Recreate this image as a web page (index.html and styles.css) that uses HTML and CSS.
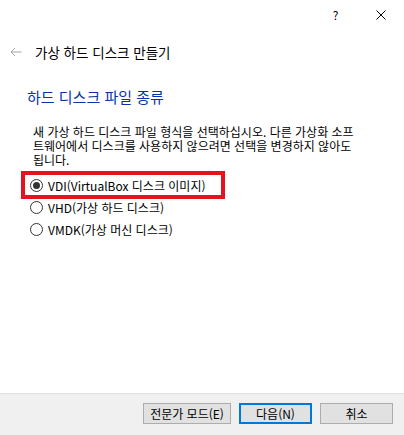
FILE: index.html
```html
<!DOCTYPE html>
<html lang="ko">
<head>
  <meta charset="UTF-8">
  <meta name="viewport" content="width=device-width, initial-scale=1.0">
  <title>가상 하드 디스크 만들기</title>
  <link rel="stylesheet" href="styles.css">
</head>
<body>
  <div class="window">
    <div class="titlebar">
      <span class="caption-btn help">?</span>
      <span class="caption-btn close">
        <svg width="10" height="10" viewBox="0 0 10 10"><path d="M0.5 0.5 L9.5 9.5 M9.5 0.5 L0.5 9.5" stroke="#000" stroke-width="1" fill="none"/></svg>
      </span>
    </div>

    <div class="header">
      <svg class="back" width="12" height="10" viewBox="0 0 12 10"><path d="M11.5 5 H1 M5 1 L1 5 L5 9" stroke="#a6a6a6" stroke-width="1" fill="none"/></svg>
      <span class="header-title">가상 하드 디스크 만들기</span>
    </div>

    <h1 class="page-title">하드 디스크 파일 종류</h1>

    <p class="desc">새 가상 하드 디스크 파일 형식을 선택하십시오. 다른 가상화 소프<br>트웨어에서 디스크를 사용하지 않으려면 선택을 변경하지 않아도<br>됩니다.</p>

    <div class="options">
      <label class="option selected">
        <svg class="radio" width="13" height="13" viewBox="0 0 13 13"><circle cx="6.5" cy="6.5" r="6" stroke="#333" fill="#fff"/><circle cx="6.5" cy="6.5" r="3.5" fill="#333"/></svg>
        <span>VDI(VirtualBox 디스크 이미지)</span>
      </label>
      <label class="option">
        <svg class="radio" width="13" height="13" viewBox="0 0 13 13"><circle cx="6.5" cy="6.5" r="6" stroke="#333" fill="#fff"/></svg>
        <span>VHD(가상 하드 디스크)</span>
      </label>
      <label class="option">
        <svg class="radio" width="13" height="13" viewBox="0 0 13 13"><circle cx="6.5" cy="6.5" r="6" stroke="#333" fill="#fff"/></svg>
        <span>VMDK(가상 머신 디스크)</span>
      </label>
    </div>

    <div class="footer">
      <button class="btn expert">전문가 모드(E)</button>
      <button class="btn default">다음(N)</button>
      <button class="btn">취소</button>
    </div>
  </div>
</body>
</html>
```

FILE: styles.css
```css
* {
  margin: 0;
  padding: 0;
  box-sizing: border-box;
}

body {
  font-family: "Noto Sans CJK KR", "Liberation Sans", sans-serif;
  font-size: 12px;
  color: #000;
  background: #fff;
}

.window {
  width: 404px;
  height: 435px;
  display: flex;
  flex-direction: column;
}

.titlebar {
  height: 30px;
  display: flex;
  justify-content: flex-end;
  padding-right: 1px;
}

.caption-btn {
  width: 45px;
  height: 30px;
  display: flex;
  align-items: center;
  justify-content: center;
}

.help {
  font-size: 12px;
  line-height: 1;
}

.header {
  height: 44px;
  display: flex;
  align-items: center;
  padding-left: 10px;
  gap: 13px;
}

.header-title {
  font-size: 13.5px;
  line-height: 18px;
}

.page-title {
  font-size: 15px;
  font-weight: normal;
  line-height: 20px;
  color: #0a33aa;
  margin: 13px 0 0 27px;
}

.desc {
  margin: 18px 0 0 33px;
  line-height: 14px;
}

.options {
  margin: 7px 0 0 21px;
  display: flex;
  flex-direction: column;
}

.option {
  height: 22px;
  display: flex;
  align-items: center;
  gap: 5px;
  padding-left: 9px;
}

.option.selected {
  width: 204px;
  height: 28px;
  margin: -3px 0;
  padding-left: 5px;
  border: 4px solid #e81123;
}

.radio {
  flex-shrink: 0;
}

.footer {
  margin-top: auto;
  height: 42px;
  border-top: 1px solid #dfdfdf;
  background: #f0f0f0;
  display: flex;
  justify-content: flex-end;
  align-items: flex-start;
  gap: 8px;
  padding: 9px 11px 0 0;
}

.btn {
  height: 21px;
  width: 73px;
  background: #e1e1e1;
  border: 1px solid #adadad;
  font-family: inherit;
  font-size: 12px;
  color: #000;
  line-height: 1;
}

.btn.expert {
  width: 88px;
}

.btn.default {
  border: 2px solid #0078d7;
}
```
